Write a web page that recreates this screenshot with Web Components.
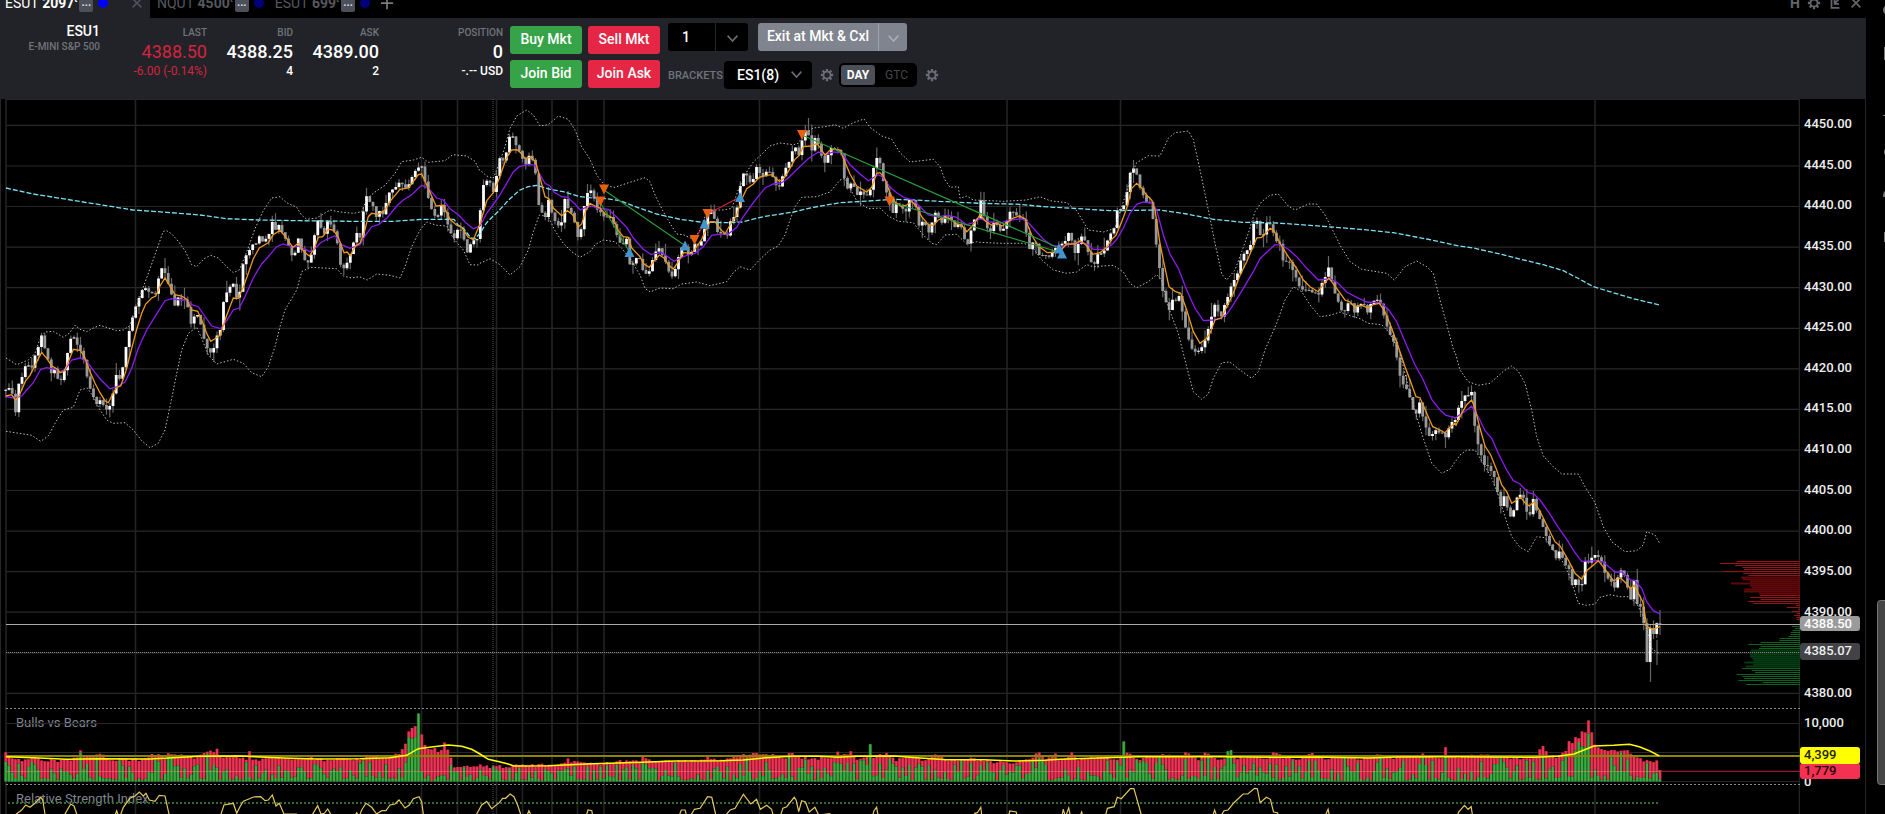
<!DOCTYPE html>
<html lang="en">
<head>
<meta charset="utf-8">
<title>ESU1 - E-MINI S&amp;P 500</title>
<style>
html, body { height: 100%; }
body {
  margin: 0;
  background: #000;
  color: #fff;
  font-family: Roboto, "Liberation Sans", sans-serif;
  overflow: hidden;
}
</style>
</head>
<body>
<trading-app></trading-app>

<script>
const define = (name, html, setup) => {
  const template = document.createElement("template");
  template.innerHTML = html;
  customElements.define(name, class extends HTMLElement {
    constructor() {
      super();
      this.attachShadow({ mode: "open" });
      this.shadowRoot.appendChild(template.content.cloneNode(true));
    }
    connectedCallback() {
      if (setup) setup(this.shadowRoot, this);
    }
  });
};

// icons
const ICONS = {
  gear: `<g fill="none" stroke="currentColor" stroke-width="2"><circle cx="8" cy="8" r="4"/></g>
    <g stroke="currentColor" stroke-width="2.6"><path d="M8 1v3M8 12v3M1 8h3M12 8h3M3 3l2.200 2.200M10.800 10.800L13 13M13 3l-2.200 2.200M5.200 10.800L3 13"/></g>`,
  chevron: `<path d="M2 4.500L8 11l6-6.500" fill="none" stroke="currentColor" stroke-width="2"/>`,
  close: `<path d="M3 3l10 10M13 3L3 13" fill="none" stroke="currentColor" stroke-width="2"/>`,
  plus: `<path d="M8 1v14M1 8h14" fill="none" stroke="currentColor" stroke-width="2"/>`,
  popout: `<path d="M4 3v10.500h9M13 3L7.500 8.500M7.500 4v5h5" fill="none" stroke="currentColor" stroke-width="2"/>`
};

define("ui-icon", `
<style>
:host { display: inline-flex; width: 14px; height: 14px; }
svg { width: 100%; height: 100%; }
</style>
<svg viewBox="0 0 16 16" aria-hidden="true"></svg>`, (root, el) => {
  root.querySelector("svg").innerHTML = ICONS[el.getAttribute("name")];
});

define("chart-tab", `
<style>
:host {
  display: flex;
  align-items: center;
  height: 30px;
  color: #55585f;
  font-size: 14px;
  white-space: nowrap;
}
:host([active]) { background: #222328; color: #fff; }
b { font-weight: 700; margin-left: 4px; }
sup { font-size: 9px; line-height: 0; }
button {
  width: 14px;
  height: 18px;
  margin-left: 2px;
  padding: 0;
  border: 0;
  border-radius: 2px;
  background: #4b505b;
  color: #ddd;
  font: 700 11px/14px Roboto, sans-serif;
}
i { width: 10px; height: 10px; margin-left: 5px; border-radius: 50%; background: #00007f; }
:host([active]) i { background: #0000ff; }
</style>
<slot></slot><b><slot name="ticks"></slot><sup>t</sup></b><button aria-label="Tab menu">...</button><i></i><slot name="end"></slot>`);

define("tab-bar", `
<style>
:host {
  display: flex;
  align-items: flex-end;
  justify-content: space-between;
  height: 18px;
  overflow: hidden;
}
nav, .tools { display: flex; align-items: center; height: 30px; }
chart-tab { padding: 0 4px 0 7px; }
chart-tab[active] { width: 145px; padding: 0 0 0 5px; }
button { display: flex; padding: 0; border: 0; background: none; color: #62656d; }
.close { margin: 0 6px 0 auto; color: #4c4f57; }
.add { margin-left: 6px; color: #777a80; }
.tools { gap: 7px; padding-right: 3px; }
.tools button { font: 700 14px Roboto, sans-serif; }
</style>
<nav>
  <chart-tab active>ESU1<span slot="ticks">2097</span><button class="close" slot="end" aria-label="Close tab"><ui-icon name="close"></ui-icon></button></chart-tab>
  <chart-tab>NQU1<span slot="ticks">4500</span></chart-tab>
  <chart-tab>ESU1<span slot="ticks">699</span></chart-tab>
  <button class="add" aria-label="Add tab"><ui-icon name="plus"></ui-icon></button>
</nav>
<div class="tools">
  <button>H</button>
  <button aria-label="Settings"><ui-icon name="gear"></ui-icon></button>
  <button aria-label="Pop out"><ui-icon name="popout"></ui-icon></button>
  <button aria-label="Close"><ui-icon name="close"></ui-icon></button>
</div>`);

define("quote-cell", `
<style>
:host {
  display: flex;
  flex-direction: column;
  align-items: flex-end;
  width: 86px;
  padding-top: 9px;
  box-sizing: border-box;
  white-space: nowrap;
}
.label { color: #6f737c; font-size: 10px; font-weight: 500; line-height: 12px; }
.value { font-size: 18px; font-weight: 500; line-height: 26px; }
.sub { font-size: 12px; font-weight: 500; line-height: 12px; }
:host([down]) .value, :host([down]) .sub { color: #d3233f; font-weight: 400; }
</style>
<span class="label"><slot name="label"></slot></span>
<span class="value"><slot></slot></span>
<span class="sub"><slot name="sub"></slot></span>`);

define("trade-button", `
<style>
:host { display: block; }
button {
  width: 100%;
  height: 28px;
  padding: 0 0 2px;
  border: 0;
  border-radius: 3px;
  background: #37a349;
  color: #fff;
  font: 500 14px Roboto, sans-serif;
  white-space: nowrap;
}
:host([side="sell"]) button { background: #e52645; }
</style>
<button><slot></slot></button>`);

define("order-bar", `
<style>
:host {
  display: flex;
  height: 81px;
  background: #222328;
  box-sizing: border-box;
}
.symbol { width: 100px; padding-top: 5px; text-align: right; box-sizing: border-box; }
.symbol b { display: block; font-size: 14px; font-weight: 500; line-height: 16px; }
.symbol span { display: block; color: #6f737c; font-size: 10px; font-weight: 500; line-height: 16px; }
.last { width: 107px; }
.position { width: 124px; }
.orders {
  display: grid;
  grid-template-columns: 72px 72px;
  align-content: start;
  gap: 6px;
  padding: 8px 0 0 7px;
}
.settings { padding: 5px 0 0 8px; }
.row { display: flex; align-items: center; }
.row + .row { margin-top: 10px; }
.qty, .exit { display: flex; height: 28px; border-radius: 3px; overflow: hidden; }
.qty { width: 80px; background: #000; }
.qty input {
  width: 48px;
  padding: 0 0 0 14px;
  border: 0;
  border-right: 1px solid #26272b;
  box-sizing: border-box;
  background: none;
  color: #fff;
  font: 500 14px Roboto, sans-serif;
}
button { border: 0; padding: 0; background: none; color: #696d76; font: 500 14px Roboto, sans-serif; }
.qty button { flex: 1; }
ui-icon { width: 13px; height: 13px; vertical-align: middle; }
.exit { margin-left: 10px; background: #80848e; }
.exit button { width: 28px; color: #a9acb4; }
.exit button:first-child { width: 121px; padding-bottom: 2px; border-right: 1px solid #9da0a8; color: #fff; }
label { width: 56px; color: #6f737c; font-size: 11px; font-weight: 500; }
.pick { position: relative; width: 88px; height: 28px; }
.pick select {
  width: 100%;
  height: 100%;
  padding: 0 0 0 13px;
  border: 0;
  border-radius: 4px;
  appearance: none;
  background: #000;
  color: #fff;
  font: 500 14px Roboto, sans-serif;
}
.pick ui-icon { position: absolute; right: 9px; top: 7px; color: #696d76; pointer-events: none; }
.gear { display: flex; margin: 0 5px 0 8px; }
.gear ui-icon { width: 14px; height: 14px; }
.tif { display: flex; height: 20px; padding: 2px; border-radius: 5px; background: #000; }
.tif button { width: 37px; border-radius: 3px; color: #44464c; font-size: 12px; font-weight: 400; }
.tif .on { background: #4b4f58; color: #fff; font-weight: 700; width: 34px; margin-right: 3px; }
</style>
<div class="symbol"><b>ESU1</b><span>E-MINI S&amp;P 500</span></div>
<quote-cell class="last" down><span slot="label">LAST</span>4388.50<span slot="sub">-6.00 (-0.14%)</span></quote-cell>
<quote-cell><span slot="label">BID</span>4388.25<span slot="sub">4</span></quote-cell>
<quote-cell><span slot="label">ASK</span>4389.00<span slot="sub">2</span></quote-cell>
<quote-cell class="position"><span slot="label">POSITION</span>0<span slot="sub">-.-- USD</span></quote-cell>
<div class="orders">
  <trade-button side="buy">Buy Mkt</trade-button>
  <trade-button side="sell">Sell Mkt</trade-button>
  <trade-button side="buy">Join Bid</trade-button>
  <trade-button side="sell">Join Ask</trade-button>
</div>
<div class="settings">
  <div class="row">
    <div class="qty"><input value="1" aria-label="Quantity"><button aria-label="Quantities"><ui-icon name="chevron"></ui-icon></button></div>
    <div class="exit"><button>Exit at Mkt &amp; Cxl</button><button aria-label="Exit options"><ui-icon name="chevron"></ui-icon></button></div>
  </div>
  <div class="row">
    <label for="brackets">BRACKETS</label>
    <div class="pick"><select id="brackets"><option>ES1(8)</option></select><ui-icon name="chevron"></ui-icon></div>
    <button class="gear" aria-label="Bracket settings"><ui-icon name="gear"></ui-icon></button>
    <div class="tif"><button class="on">DAY</button><button>GTC</button></div>
    <button class="gear" aria-label="Order settings"><ui-icon name="gear"></ui-icon></button>
  </div>
</div>`);

define("price-axis", `
<style>
:host {
  position: relative;
  display: grid;
  grid-template-rows: 610fr 75fr 30fr;
  box-sizing: border-box;
  overflow: hidden;
  font-size: 13px;
  font-weight: 500;
  line-height: 16px;
  color: #eee;
}
div { display: flex; flex-direction: column; justify-content: space-between; padding-left: 4px; min-height: 0; }
.prices { padding-top: 17px; padding-bottom: 8px; }
.volume { padding-top: 6px; margin-bottom: -6px; }
.rsi { padding-top: 28px; }
/* current value tags sit over the scale */
output {
  position: absolute;
  left: 0;
  width: 60px;
  height: 16px;
  padding-left: 4px;
  box-sizing: border-box;
  border-radius: 3px;
}
.last { top: 72.300%; height: 15px; line-height: 15px; background: #9b9b9b; color: #fff; }
.vwap { top: 76.100%; height: 17px; background: #434347; }
.bears { top: 92.900%; background: #f53153; color: #20070c; }
.bulls { top: 90.600%; height: 17px; background: #ffff00; color: #222200; }
</style>
<div class="prices"></div>
<div class="volume"><span>10,000</span><span>5,000</span><span>0</span></div>
<div class="rsi"><span>70</span></div>
<output class="last">4388.50</output>
<output class="vwap">4385.07</output>
<output class="bears">1,779</output>
<output class="bulls">4,399</output>`, (root) => {
  const prices = root.querySelector(".prices");
  for (let p = 4450; p >= 4380; p -= 5) {
    const span = document.createElement("span");
    span.textContent = p.toFixed(2);
    prices.append(span);
  }
});

// Series are kept in chunks: [x origin, y origin, x units per px, y units per px, "x,y x,y ..."]
const points = (chunks) => chunks.flatMap(([ox, oy, sx, sy, s]) =>
  s.trim().split(/\s+/).map((p) => {
    const [x, y] = p.split(",").map(Number);
    return [ox + x / sx, oy + y / sy];
  }));
const A = [0, 100, 3, 3], B = [480, 100, 3, 3], C = [960, 120, 3, 3], D = [1340, 240, 3, 3];
const VA = [0, 690, 3, 3], VB = [480, 690, 2.6576, 3], VC = [1060, 690, 2.529, 3];

const FAST = points([
  [...A, "18,888 35,884 47,901 58,886 77,842 90,826 100,806 113,780 125,757 140,775 155,797 170,806 180,818 192,814 205,786 220,748 240,751 253,768 268,810 285,850 300,878 315,902 325,908 335,888 350,862 362,858 378,812 395,745 410,688 425,640 437,612 455,594 467,588 480,558 495,534 505,550 525,584 545,588 560,598 575,630 593,634 605,660 620,700 632,724 645,716 660,706 680,646 700,594 715,595 730,562 745,520 760,476 778,444 805,428 820,404 840,391 855,408 878,442 895,430 912,455 928,468 942,448 955,412 968,410 985,388 1000,390 1015,412 1032,458 1042,456 1050,467 1068,436 1080,430 1092,400 1105,350 1115,340 1135,343 1155,330 1170,304 1185,286 1200,268 1225,264 1240,245 1255,224 1265,222 1285,265 1308,318 1330,316 1350,358 1370,376 1385,382 1405,412 1420,419 1440,372 1460,302 1480,278 1498,235"],
  [...B, "62,222 80,172 95,150 110,149 120,156 135,175 155,172 168,190 180,232 195,290 207,296 220,324 245,347 262,332 278,344 295,381 305,372 318,330 330,310 345,318 360,324 375,342 400,355 415,392 430,410 445,412 455,444 480,470 492,492 508,502 520,486 538,465 552,474 565,494 580,507 595,486 610,458 635,460 650,440 665,418 680,385 690,366 705,365 720,386 735,402 750,375 770,345 785,298 800,266 820,252 838,232 860,226 875,224 898,244 912,235 930,205 945,178 958,166 970,140 995,138 1010,130 1020,142 1035,166 1050,150 1065,148 1080,150 1092,180 1110,222 1130,258 1160,276 1175,262 1190,220 1200,218 1215,236 1230,280 1245,306 1265,320 1280,315 1295,304 1310,320 1325,350 1345,374 1360,376 1375,360 1395,352 1410,356 1430,372 1445,375 1460,395 1475,380 1490,360"],
  [...C, "60,284 75,302 95,316 110,308 125,318 140,310 155,296 178,288 195,296 215,345 235,378 262,398 290,396 305,388 320,372 345,372 360,362 378,375 398,403 420,398 440,382 455,358 468,346 485,305 500,265 515,205 530,190 545,204 560,226 575,240 585,270 600,370 612,430 627,500 645,514 662,520 680,570 700,635 720,670 738,656 750,640 765,600 785,594 800,560 820,520 840,466 860,425 875,390 890,354 905,352 918,338 930,325 942,332 960,370 985,410 1010,445 1030,480 1050,500 1075,515 1095,486 1107,475 1130,505 1155,540 1170,546 1185,562 1205,556 1225,564 1240,554 1258,550 1275,575 1295,625 1315,680 1335,740 1350,780 1368,830 1380,833 1400,880 1418,920 1440,930 1455,938 1470,922 1485,910"],
  [...D, "348,556 365,520 380,494 395,480 405,505 420,565 435,618 452,645 470,690 485,735 500,755 515,790 530,780 542,772 555,788 568,798 582,786 598,810 620,855 645,905 660,918 685,960 705,1000 725,1018 740,992 757,978 775,962 800,994 820,1022 842,1014 858,1030 872,1046 882,1036 895,1060 908,1085 914,1120 920,1160 940,1168 960,1160"]
]);
const SLOW = points([
  [...A, "18,890 45,894 65,888 80,870 100,848 122,808 140,803 165,808 180,814 195,810 215,780 240,774 260,784 285,818 305,842 330,866 352,860 375,846 395,805 415,745 440,690 465,650 495,602 515,596 540,600 560,600 575,614 595,620 610,642 635,678 662,686 680,662 700,630 718,624 735,590 760,534 785,492 805,470 830,440 850,432 880,442 895,438 930,455 945,446 960,430 980,418 1005,407 1025,434 1050,445 1080,434 1095,408 1115,380 1135,374 1160,355 1190,318 1210,300 1235,284 1265,256 1285,264 1310,294 1330,300 1350,326 1375,344 1395,366 1420,386 1440,378 1460,340 1485,306 1498,288"],
  [...B, "60,284 80,250 100,216 118,200 145,193 165,196 180,224 195,250 210,258 222,276 245,290 262,292 285,312 300,330 318,322 335,318 352,324 385,328 410,352 440,382 460,414 490,448 512,463 545,458 560,468 582,484 600,474 620,466 645,460 670,440 695,406 715,403 745,402 770,382 790,350 820,308 855,264 880,252 905,248 925,234 955,204 985,176 1015,156 1040,163 1060,156 1085,158 1110,194 1140,222 1165,242 1195,224 1210,232 1230,262 1250,278 1275,294 1300,300 1320,320 1345,345 1370,350 1405,346 1430,352 1460,374 1480,368"],
  [...C, "60,296 90,306 125,308 150,300 185,296 205,308 225,330 250,358 275,376 305,380 340,370 365,367 385,374 400,388 430,388 455,375 470,358 490,325 510,280 530,253 550,246 575,248 590,270 610,345 630,402 655,445 680,510 705,565 730,602 760,600 780,594 800,583 820,554 850,505 880,455 900,416 925,392 945,374 965,376 985,388 1010,410 1040,445 1075,480 1110,476 1135,490 1160,516 1190,532 1220,546 1262,548 1285,568 1310,605 1335,665 1365,735 1390,780 1415,838 1440,870 1458,886 1480,891"],
  [...D, "345,534 375,514 395,499 415,530 435,572 455,595 475,640 500,690 520,722 540,732 565,758 582,762 600,780 625,815 655,862 680,898 705,938 725,964 770,962 790,966 825,996 845,996 872,1020 885,1022 905,1045 920,1085 940,1112 960,1122"]
]);
const VWAP = points([
  [...A, "18,264 100,282 200,298 300,314 400,330 500,337 600,345 680,356 780,360 900,362 1050,364 1180,364 1270,358 1362,358 1375,376 1390,385 1412,413 1425,416 1440,400 1460,368 1480,348 1498,332"],
  [...B, "60,328 90,296 120,270 145,260 170,256 210,268 250,275 300,290 330,293 370,295 420,302 480,325 530,342 600,358 660,366 740,368 785,366 850,350 940,336 1000,322 1080,308 1180,302 1240,298 1300,300 1400,305 1498,310"],
  [...C, "60,250 180,253 250,260 340,265 450,272 600,270 680,282 760,298 850,307 950,309 1050,316 1200,328 1300,338 1400,357 1498,378"],
  [...D, "360,18 400,24 480,42 560,62 610,74 670,92 720,118 760,140 820,158 880,176 920,186 960,195"]
]);
const UPPER = points([
  [...A, "18,774 50,794 85,780 105,760 118,722 135,696 160,694 190,712 208,700 225,676 240,688 260,695 280,684 300,676 325,684 350,692 370,690 388,678 405,636 428,566 450,506 475,436 490,394 500,392 515,402 535,424 555,452 575,494 590,500 612,476 632,466 655,474 680,500 700,518 718,510 740,456 765,386 790,332 815,294 840,290 860,308 890,322 905,346 920,358 950,354 965,345 990,330 1020,336 1060,340 1085,335 1100,296 1125,276 1155,256 1185,220 1205,185 1240,180 1265,172 1285,187 1335,182 1358,164 1400,168 1425,184 1438,210"],
  [...B, "0,210 20,228 40,235 58,190 75,140 90,85 110,48 140,30 160,45 180,78 205,74 235,48 265,58 285,90 305,140 330,178 350,225 375,258 405,262 440,250 495,233 510,245 525,285 550,335 570,370 590,402 610,404 640,418 660,390 675,350 700,330 730,330 755,325 775,270 800,216 820,186 850,158 870,138 900,129 940,134 955,130 970,105 1000,84 1035,80 1065,74 1090,85 1120,68 1152,57 1170,82 1205,108 1235,118 1260,158 1290,186 1360,178 1380,200 1395,240 1410,262 1435,260"],
  [...C, "0,235 20,228 40,240 130,244 200,240 240,230 270,242 320,248 350,272 385,330 430,336 465,325 480,275 500,215 515,160 530,128 565,107 600,108 625,55 645,38 685,33 700,58 720,150 745,270 765,370 785,462 800,480 825,450 845,395 865,340 885,275 905,245 930,226 955,222 985,258 1005,270 1045,252 1070,252 1095,285 1115,325 1140,375 1170,425 1205,448 1280,460 1303,480 1335,440 1370,423 1400,440 1420,460 1440,540 1465,630 1482,695"],
  [...D, "345,335 360,390 385,425 415,436 450,430 490,394 515,378 535,394 555,430 575,510 590,590 610,648 640,680 665,702 715,702 735,740 765,788 790,860 815,905 855,935 890,932 910,915 920,875 945,885 960,912"]
]);
const LOWER = points([
  [...A, "18,994 70,1002 95,1006 122,1024 145,1008 165,970 190,930 220,922 240,870 262,864 280,890 300,930 320,960 340,970 375,968 400,990 425,1022 450,1043 475,1030 495,990 512,910 530,820 545,750 565,700 590,682 605,715 625,765 650,792 700,778 730,790 755,818 785,830 805,800 825,740 840,680 855,630 890,570 905,515 930,502 1010,506 1030,528 1055,534 1078,530 1102,540 1130,522 1170,526 1200,534 1215,500 1235,440 1260,390 1280,366 1310,376 1340,378 1360,415 1390,450 1410,494 1435,495"],
  [...B, "0,490 30,476 60,494 90,525 120,500 145,450 160,395 178,345 205,350 225,392 250,430 275,455 300,472 330,455 345,434 370,420 405,425 425,445 450,475 480,525 495,565 510,576 540,564 580,566 605,552 650,546 690,557 740,545 760,518 780,500 810,510 840,478 870,450 895,438 915,405 930,360 945,320 965,292 1010,290 1050,276 1080,240 1095,235 1110,265 1130,302 1165,326 1200,324 1225,348 1255,364 1300,368 1330,405 1355,430 1370,434 1395,405 1430,403 1460,432 1490,425"],
  [...C, "60,367 120,370 190,370 215,378 245,420 280,450 320,460 350,456 380,434 400,440 460,436 490,456 510,490 530,503 565,485 590,464 605,480 625,560 655,640 680,740 700,815 725,838 745,822 760,775 785,728 810,726 840,750 875,775 895,755 915,690 950,610 975,540 1000,500 1025,515 1050,555 1080,590 1110,586 1140,576 1165,585 1200,596 1225,610 1265,614 1290,640 1320,700 1345,800 1370,890 1385,940"],
  [...D, "250,595 275,670 305,700 330,688 360,645 380,630 405,630 430,670 455,715 475,765 495,830 515,890 540,922 565,935 590,890 615,893 640,930 665,960 690,1010 715,1090 740,1096 765,1092 780,1072 810,1064 840,1070 865,1070 890,1090 910,1130 935,1225 960,1244"]
]);
const CLOSE = points([
  [...A, "16,870 20,860 30,868 40,888 48,945 56,855 66,835 77,790 95,800 105,765 125,710 135,750 145,785 155,820 165,800 178,855 192,810 205,750 215,702 235,740 250,770 262,835 280,890 290,910 300,900 312,920 325,938 335,900 350,820 362,845 378,745 390,685 400,645 418,590 435,560 450,580 470,580 478,522 490,500 500,530 510,570 528,632 535,590 545,600 560,605 575,680 588,630 600,660 610,712 620,740 638,772 645,710 660,700 672,595 685,562 700,552 715,612 730,486 745,456 758,432 770,435 778,405 790,425 805,412 818,360 828,398 838,370 850,405 862,430 880,484 897,400 910,480 925,488 935,460 945,400 955,356 970,410 985,353 1000,392 1012,430 1022,500 1038,510 1047,445 1056,495 1062,410 1075,400 1086,430 1090,330 1100,290 1115,310 1130,355 1140,325 1150,345 1168,275 1185,265 1200,242 1215,260 1230,250 1245,212 1260,198 1273,210 1278,285 1290,300 1298,340 1310,362 1325,308 1340,360 1350,395 1362,412 1375,380 1390,410 1405,465 1415,420 1430,430 1440,340 1450,255 1465,240 1480,272 1492,215 1498,178"],
  [...B, "60,175 75,180 85,115 98,112 110,145 122,160 135,195 150,162 165,200 175,315 190,345 200,358 208,275 218,355 235,375 245,370 255,295 268,330 280,350 290,395 298,430 305,365 315,310 325,265 335,270 350,318 358,350 366,315 375,370 385,345 400,372 412,410 425,440 440,412 452,515 462,480 475,470 485,500 495,535 502,495 512,520 520,460 535,445 550,470 560,500 575,530 588,500 598,455 612,430 625,470 635,455 645,430 658,440 670,400 682,345 695,330 705,360 715,410 728,385 738,435 745,375 760,350 775,310 782,250 792,210 805,240 815,250 830,198 845,235 860,210 875,225 890,260 900,260 910,212 925,200 932,165 945,138 960,180 970,90 985,105 995,150 1005,115 1020,140 1030,198 1040,185 1050,140 1070,145 1082,155 1092,228 1105,270 1118,240 1130,290 1140,270 1155,292 1170,270 1182,195 1195,165 1205,215 1215,275 1230,290 1240,345 1252,300 1265,330 1280,330 1290,290 1305,305 1318,380 1330,360 1345,402 1360,350 1370,335 1382,375 1395,345 1410,350 1430,395 1437,360 1448,400 1460,440 1472,395 1485,345 1495,355"],
  [...C, "62,242 72,290 80,320 92,335 102,305 125,340 140,300 152,275 170,285 190,295 205,375 212,405 222,345 235,405 250,405 265,412 285,390 300,370 315,365 328,335 345,395 360,355 368,340 380,385 400,440 410,405 425,400 435,385 445,348 460,335 472,268 485,270 495,245 505,200 512,145 525,150 540,200 555,245 570,250 582,310 592,405 603,470 612,540 622,555 632,582 640,520 650,550 660,515 670,600 682,635 692,680 705,695 718,690 728,675 740,655 748,610 760,570 768,545 780,598 792,560 800,540 812,500 825,475 835,450 845,410 855,395 870,390 880,315 893,305 903,360 912,340 922,300 935,315 945,355 960,375 972,435 985,415 998,445 1010,480 1020,510 1035,510 1050,515 1075,525 1085,495 1095,470 1108,440 1118,500 1130,530 1148,582 1160,560 1170,545 1188,590 1195,545 1210,555 1225,580 1235,540 1260,545 1275,600 1290,640 1305,680 1318,760 1330,795 1345,815 1360,870 1372,880 1380,835 1390,905 1410,950 1430,930 1460,950 1472,905 1480,902"],
  [...D, "350,545 355,500 365,480 378,460 388,470 397,455 402,520 405,575 415,615 430,675 445,675 460,700 470,738 482,800 492,765 502,800 515,835 525,790 535,760 550,775 560,820 572,820 582,760 590,815 605,850 620,890 640,935 650,955 660,930 672,970 690,990 698,1040 707,1020 720,1042 728,1025 736,960 748,965 765,945 780,955 790,985 800,1018 812,1020 820,1055 832,1015 840,990 852,1000 862,1040 874,1080 884,1008 892,1090 905,1110 913,1160 917,1180 922,1288 931,1164 942,1185 950,1153 960,1156"]
]);
const VOLUME = points([
  [...VA, "16,190 20,192 30,200 40,212 70,210 100,200 140,212 180,212 230,205 236,206 241,176 246,206 275,200 300,192 330,212 370,205 400,212 450,205 457,187 463,205 475,195 500,205 505,188 520,198 560,195 590,205 620,185 645,186 651,175 657,200 700,200 740,210 748,184 756,205 780,210 815,195 850,205 900,208 930,205 980,210 1030,203 1080,208 1110,195 1150,205 1190,195 1205,185 1215,168 1222,130 1235,112 1246,108 1256,66 1266,138 1276,172 1305,178 1320,185 1333,155 1345,180 1355,215 1362,237 1375,228 1410,232 1440,228 1470,232 1498,225"],
  [...VB, "60,230 100,228 180,225 228,222 234,203 240,218 290,215 300,225 350,215 380,215 427,215 432,196 442,208 480,212 540,215 600,208 606,196 612,210 650,208 700,195 735,186 770,200 780,190 810,205 828,188 850,205 900,205 943,205 950,185 960,200 985,185 1000,205 1030,200 1037,166 1044,200 1080,192 1100,210 1150,200 1180,212 1210,193 1250,212 1300,205 1350,215 1400,218 1450,212 1485,190 1500,210 1529,185 1536,210"],
  [...VC, "5,208 30,190 45,212 100,200 130,205 152,205 161,158 170,190 200,208 260,195 310,205 320,186 350,208 365,188 400,210 418,205 425,182 435,182 445,205 480,200 520,208 540,183 560,200 600,208 635,192 680,210 720,198 760,208 800,190 840,205 880,195 930,192 960,208 968,200 975,175 982,200 1020,200 1070,190 1110,200 1200,208 1220,170 1228,175 1235,205 1260,205 1280,180 1287,155 1295,165 1303,142 1312,145 1320,128 1328,132 1337,94 1345,130 1353,160 1365,180 1400,185 1440,185 1455,200 1480,215 1510,215 1519,243"]
]);
const VOLUME_AVG = points([
  [...VA, "18,200 100,203 200,208 300,206 450,207 520,203 600,199 720,198 850,204 950,207 1080,206 1170,203 1220,196 1255,176 1300,170 1345,165 1385,169 1415,178 1440,192 1465,208 1498,215"],
  [...VB, "75,222 90,228 180,227 300,221 430,217 520,213 640,212 700,210 760,203 830,199 900,199 950,202 1000,199 1100,198 1160,203 1240,209 1340,209 1420,213 1500,211"],
  [...VC, "0,208 100,204 200,200 400,200 560,202 650,201 780,204 850,201 1000,200 1200,202 1260,199 1300,192 1330,178 1350,168 1400,166 1440,163 1465,170 1490,182 1516,198"]
]);
const RSI = points([
  [...VA, "18,400 50,371 65,360 77,345 90,352 105,340 122,322 128,330 135,372 140,400 188,400 195,372 212,342 222,348 230,372 240,400 340,390 350,362 358,385 370,352 390,325 405,318 418,306 430,318 438,310 448,330 465,334 478,316 495,318 507,372 512,400 655,400 663,372 672,345 700,340 710,370 720,350 730,334 745,328 760,321 782,320 795,332 805,330 817,315 828,348 838,340 852,372 890,372 900,400 930,400 938,372 953,347 963,372 973,370 983,357 992,372 1000,400 1060,385 1070,368 1077,380 1085,360 1098,340 1115,352 1130,372 1145,362 1158,362 1170,345 1185,342 1197,330 1215,354 1228,345 1240,326 1257,320 1265,335 1270,372 1274,400 1420,400 1430,372 1445,345 1460,334 1475,356 1498,338"],
  [...VB, "60,325 68,325 80,312 90,320 100,345 108,372 120,390 130,362 140,385 150,400 276,400 287,360 297,362 303,400 522,400 535,360 545,360 552,390 570,358 585,355 605,320 616,322 626,372 640,400 655,372 665,360 678,355 700,313 720,342 735,328 745,358 762,346 775,358 785,400 800,372 805,355 815,350 835,322 840,330 847,365 855,332 865,336 875,366 890,352 900,375 930,371 940,400 1038,400 1047,362 1054,352 1062,400 1308,400 1315,370 1322,368 1331,352 1336,400 1400,400 1408,363 1425,366 1432,400 1530,400"],
  [...VC, "2,400 8,358 14,380 22,354 30,400 48,385 55,366 62,400 110,400 120,355 137,350 145,322 155,326 178,296 187,296 205,372 210,400 380,400 391,360 400,390 415,362 425,360 440,338 463,312 475,312 492,295 499,296 506,338 522,322 532,328 540,366 550,368 560,400 666,390 678,358 685,400 1000,400 1008,366 1023,346 1032,358 1040,350 1046,400 1519,400"]
]);

// resting orders by price level, bar start x; two px per level
const ASKS = [530, 480, 525, 547, 552, 490, 550, 565, 543, 548, 570, 513, 570, 575, 553, 552, 597, 600, 570, 602, 565, 580, 708, 680, 715, 695, 710, 702, 708, 710];
const BIDS = [695, 705, 698, 692, 692, 686, 658, 658, 602, 565, 602, 597, 573, 570, 570, 570, 577, 580, 553, 580, 557, 547, 575, 585, 530, 548, 553, 535, 608, 558];

const BAR = 3.25, LAST_X = 1660, FLOOR = 781.4;

const line = (pts) => "M" + pts.map(([x, y]) => x.toFixed(1) + " " + y.toFixed(1)).join("L");

const at = (pts, x) => {
  for (let i = 1; i < pts.length; i++) {
    if (pts[i][0] >= x) {
      const [x0, y0] = pts[i - 1], [x1, y1] = pts[i];
      return y0 + (y1 - y0) * Math.min(1, Math.max(0, (x - x0) / (x1 - x0 || 1)));
    }
  }
  return pts[pts.length - 1][1];
};

let seed = 2097;
const random = () => {
  seed = (seed * 1664525 + 1013904223) % 4294967296;
  return seed / 4294967296;
};

function drawGrid() {
  let thin = "", wide = "";
  for (let i = 0; i < 15; i++) thin += `M6 ${(125.4 + i * 40.57).toFixed(1)}H1800`;
  thin += "M6 723.500H1800M6 752.500H1800M6 781.500H1800M6 99.500H1800";
  for (const x of [135.5, 421.5, 457.5, 496.5, 522.5, 552, 577.5, 604, 759.5, 1007, 1120.5, 1595, 6, 1799.5]) wide += `M${x} 99V814`;
  return `<path d="${thin}" stroke="#282828" stroke-width="1.200"/><path d="${wide}" stroke="#232323" stroke-width="1.600"/>
    <path d="M.5 99V814" stroke="#26272c"/>
    <path d="M493 99V814" stroke="#555" stroke-dasharray="1 1"/>
    <path d="M6 708.500H1800M6 784.500H1800" stroke="#8b8b93" stroke-dasharray="2 2"/>
    <path d="M8 803H1660" stroke="#2f6b2a" stroke-width="2" stroke-dasharray="2 2"/>`;
}

function drawVolume() {
  const p = { redEdge: "", red: "", greenEdge: "", green: "" };
  const allGreen = [419, 870, 1124, 1228, 1231];
  for (let x = LAST_X - 509 * BAR; x <= LAST_X + 1; x += BAR) {
    let top = at(VOLUME, x) + (random() - 0.5) * 3;
    if (top > 778) top = 778;
    const h = FLOOR - top;
    let green = random() < 0.3 ? h * 0.12 * random() + 1 : h * (0.15 + 0.8 * random());
    if (allGreen.some((g) => Math.abs(g - x) < BAR / 2)) green = h;
    // the peaks around each open
    if (x > 410 && x < 417) green = h * 0.8;
    if (x > 1573 && x < 1588) green = Math.max(green, h * 0.7);
    if (x > 422 && x < 450) green = h * 0.2 * random();
    const gy = FLOOR - green;
    p.redEdge += `M${x - 1.6} ${top}h3.250V${gy}h-3.250z`;
    p.red += `M${x - 1} ${top}h2V${gy}h-2z`;
    p.greenEdge += `M${x - 1.6} ${gy}h3.250V${FLOOR}h-3.250z`;
    p.green += `M${x - 1} ${gy}h2V${FLOOR}h-2z`;
  }
  return `<path d="${p.redEdge}" fill="#8a2036"/><path d="${p.red}" fill="#f53153"/>
    <path d="${p.greenEdge}" fill="#226526"/><path d="${p.green}" fill="#3aad40"/>
    <path d="M6 756H1800" stroke="#8a8600" stroke-width="2"/>
    <path d="M6 771.500H1660" stroke="#f2808c" stroke-opacity=".5"/>
    <path d="M1660 771.300H1800" stroke="#b02a40"/>
    <path d="${line(VOLUME_AVG)}" stroke="#ffff00" stroke-width="1.500"/>`;
}

function drawCandles() {
  let wick = "", up = "", down = "";
  let open = at(CLOSE, 4);
  for (let x = LAST_X - 509 * BAR; x <= LAST_X + 1; x += BAR) {
    const close = at(CLOSE, x) + (random() - 0.5) * 3;
    const hi = Math.min(open, close), lo = Math.max(open, close);
    wick += `M${x.toFixed(1)} ${(hi - random() * random() * 14).toFixed(1)}V${(lo + random() * random() * 14).toFixed(1)}`;
    const body = `M${(x - 1.4).toFixed(1)} ${hi.toFixed(1)}h2.800v${Math.max(1, lo - hi).toFixed(1)}h-2.800z`;
    if (close < open) up += body; else down += body;
    open = close;
  }
  return `<path d="${wick}M1650.500 660V682M1657 640V665M1660 610V635" stroke="#666" stroke-width="1.200"/><path d="${down}" fill="#999"/><path d="${up}" fill="#fff"/>`;
}

function drawDepth() {
  let rows = "";
  const side = (list, y0, colour, fill, from, to) => list.forEach((start, i) => {
    const x = 1560 + start / 3;
    const full = i >= from && i <= to;
    rows += `<path d="M${x.toFixed(1)} ${y0 + i * 2}H1800" stroke="${full ? fill : colour}" stroke-width="${full ? 2 : 1}"/>`;
  });
  side(ASKS, 561.5, "#9c1116", "#62080b", 8, 16);
  side(BIDS, 626.5, "#0a651f", "#043d11", 12, 20);
  return rows;
}

function drawTrades() {
  const sells = [[604, 189.5], [600.5, 201.5], [707.5, 214], [694.5, 240], [802, 135], [889.5, 201.5]];
  const buys = [[629.5, 252], [685, 245.5], [704.5, 223.5], [740, 197], [1059, 248.5], [1062, 253.5]];
  return `<path d="M604 190L685 245.500M600.500 203L629.500 252M802 135L1059 248M889.500 202L1062 253" stroke="#2a9a3c" stroke-width="1.200"/>
    <path d="M694.500 240L704.500 223.500M707.500 214L740 197" stroke="#d4213c" stroke-width="1.200"/>` +
    sells.map(([x, y]) => `<path d="M${x - 5} ${y - 5}h10l-5 10z" fill="#e8600f"/>`).join("") +
    buys.map(([x, y]) => `<path d="M${x - 5} ${y + 5}h10l-5-10z" fill="#4393cc"/>`).join("");
}

define("price-chart", `
<style>
:host { position: relative; display: block; overflow: hidden; }
svg { position: relative; display: block; width: 100%; height: 100%; }
/* study names are under the plot, the grid runs over them */
span {
  position: absolute;
  left: 16px;
  color: #80848f;
  font-size: 13px;
  line-height: 16px;
}
.bulls { top: 86.200%; }
.rsi { top: 96.800%; }
</style>
<span class="bulls">Bulls vs Bears</span>
<span class="rsi">Relative Strength Index</span>
<svg viewBox="0 99 1800 715" preserveAspectRatio="none" fill="none" role="img" aria-label="ESU1 price chart"></svg>`, (root) => {
  root.querySelector("svg").innerHTML =
    drawGrid() + drawDepth() + drawVolume() +
    `<path d="M6 652.500H1800" stroke="#88888c" stroke-dasharray="1 1"/>` +
    drawCandles() +
    `<path d="${line(UPPER)}" stroke="#bbb" stroke-dasharray="1.500 2"/>
    <path d="${line(LOWER)}" stroke="#bbb" stroke-dasharray="1.500 2"/>
    <path d="${line(VWAP)}" stroke="#7ae0f2" stroke-width="1.300" stroke-dasharray="5 2"/>
    <path d="${line(SLOW)}" stroke="#8a1cf0" stroke-width="1.300"/>
    <path d="${line(FAST)}" stroke="#f0991c" stroke-width="1.300"/>
    <path d="${line(RSI)}" stroke="#e3c860" stroke-width="1.200"/>
    <path d="M6 624.500H1800" stroke="#aaa"/>` +
    drawTrades();
});

define("side-rail", `
<style>
:host { display: block; overflow: hidden; }
svg { display: block; width: 100%; height: 100%; }
</style>
<svg viewBox="0 0 19 814" preserveAspectRatio="xMaxYMin slice" aria-hidden="true">
  <g fill="#777"><circle cx="22" cy="10" r="5"/><path d="M18 47h1v13h-1zM17 115h2v1h-2zM17 197q0-5 2-6v6z"/><circle cx="22" cy="152" r="4"/></g>
  <rect x="11.500" y="600.500" width="14" height="184" rx="3" fill="#454545" stroke="#777"/>
  <path d="M18 232h1v10h-1z" fill="#777"/>
</svg>`);

define("trading-app", `
<style>
:host {
  display: grid;
  grid-template-columns: minmax(0, 1fr) 19px;
  height: 100vh;
}
main { display: flex; flex-direction: column; min-height: 0; }
.chart {
  flex: 1;
  display: grid;
  grid-template-columns: minmax(0, 1fr) 66px;
  grid-template-rows: minmax(0, 1fr);
  min-height: 0;
}
price-axis { border-right: 1px solid #26272c; }
</style>
<main>
  <tab-bar></tab-bar>
  <order-bar></order-bar>
  <div class="chart"><price-chart></price-chart><price-axis></price-axis></div>
</main>
<side-rail></side-rail>`);
</script>
</body>
</html>
